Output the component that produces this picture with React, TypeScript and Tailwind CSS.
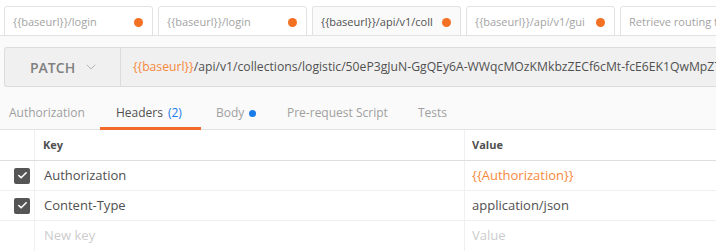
import { Check, ChevronDown } from "lucide-react";

const tabs = [
  { label: "{{baseurl}}/login", dot: true, active: false },
  { label: "{{baseurl}}/login", dot: true, active: false },
  { label: "{{baseurl}}/api/v1/coll", dot: true, active: true },
  { label: "{{baseurl}}/api/v1/gui", dot: true, active: false },
  { label: "Retrieve routing f", dot: false, active: false },
];

const rows = [
  { key: "Authorization", value: "{{Authorization}}", orange: true },
  { key: "Content-Type", value: "application/json", orange: false },
];

export default function App() {
  return (
    <div className="h-[251px] w-[716px] overflow-hidden bg-[#fafafa] font-['Open_Sans',sans-serif]">
      {/* open request tabs */}
      <div className="flex h-[36px] items-end gap-[5px] overflow-hidden border-b border-[#e2e2e2] bg-white pl-1">
        {tabs.map((t, i) => (
          <div
            key={i}
            className={`-mb-px flex h-[30px] w-[149px] shrink-0 items-center justify-between rounded-t-[3px] border border-[#e2e2e2] pl-2 pr-[9px] pt-[2px] text-[11px] ${
              t.active ? "border-b-[#fafafa] bg-[#fafafa] text-[#505050]" : "bg-white text-[#a3a3a3]"
            }`}
          >
            <span className="mr-[6px] overflow-hidden whitespace-nowrap">{t.label}</span>
            {t.dot && <span className="h-[9px] w-[9px] shrink-0 rounded-full bg-[#f47023]" />}
          </div>
        ))}
      </div>

      {/* url bar */}
      <div className="mt-[11px] ml-1 flex h-[40px] rounded-l-[3px] border-y border-l border-[#dcdcdc] bg-[#f0f0f0]">
        <div className="flex w-[116px] shrink-0 items-center border-r border-[#dcdcdc] pl-[25px] text-[14px] font-semibold text-[#808080]">
          PATCH
          <ChevronDown className="ml-[8px] text-[#b5b5b5]" size={16} strokeWidth={1.5} />
        </div>
        <div className="flex items-center overflow-hidden whitespace-nowrap pl-[12px] text-[12.2px] text-[#505050]">
          <span className="text-[#f7893b]">{"{{baseurl}}"}</span>
          /api/v1/collections/logistic/50eP3gJuN-GgQEy6A-WWqcMOzKMkbzZECf6cMt-fcE6EK1QwMpZ7L
        </div>
      </div>

      {/* request sub tabs */}
      <div className="mt-[13px] flex h-[30px] border-b border-[#e2e2e2] text-[12px] text-[#a0a0a0]">
        <div className="flex w-[100px] items-center pb-[3px] pl-[9px]">Authorization</div>
        <div className="relative flex w-[101px] items-center pb-[3px] pl-[16px] text-[#505050]">
          Headers <span className="ml-[5px] text-[#1a7bea]">(2)</span>
          <span className="absolute -bottom-px left-0 right-0 h-[3px] bg-[#f26b2a]" />
        </div>
        <div className="ml-[15px] flex w-[71px] items-center pb-[3px]">
          Body
          <span className="ml-[5px] h-[7px] w-[7px] rounded-full bg-[#1a7bea]" />
        </div>
        <div className="flex w-[131px] items-center pb-[3px]">Pre-request Script</div>
        <div className="flex items-center pb-[3px]">Tests</div>
      </div>

      {/* headers table */}
      <div className="bg-white text-[13px]">
        <div className="flex h-[31px] border-b border-[#dedede] text-[11px] font-bold text-[#505050]">
          <div className="w-[35px] shrink-0 border-r border-[#f0f0f0]" />
          <div className="flex w-[430px] shrink-0 items-center border-r border-[#f0f0f0] pl-[8px]">Key</div>
          <div className="flex items-center pl-[7px]">Value</div>
        </div>
        {rows.map((r) => (
          <div key={r.key} className="flex h-[30px] border-b border-[#efefef]">
            <div className="flex w-[35px] shrink-0 items-center justify-end border-r border-[#f0f0f0] pr-[4px]">
              <span className="flex h-[16px] w-[16px] items-center justify-center rounded-[2px] bg-[#555555]">
                <Check className="text-white" size={11} strokeWidth={3.5} />
              </span>
            </div>
            <div className="flex w-[430px] shrink-0 items-center border-r border-[#f0f0f0] pl-[9px] text-[#505050]">
              {r.key}
            </div>
            <div className={`flex items-center pl-[7px] ${r.orange ? "text-[#f7893b]" : "text-[#505050]"}`}>
              {r.value}
            </div>
          </div>
        ))}
        <div className="flex h-[30px]">
          <div className="w-[35px] shrink-0 border-r border-[#f0f0f0]" />
          <div className="flex w-[430px] shrink-0 items-center border-r border-[#f0f0f0] pl-[9px] text-[#cccccc]">
            New key
          </div>
          <div className="flex items-center pl-[7px] text-[#cccccc]">Value</div>
        </div>
      </div>
    </div>
  );
}
